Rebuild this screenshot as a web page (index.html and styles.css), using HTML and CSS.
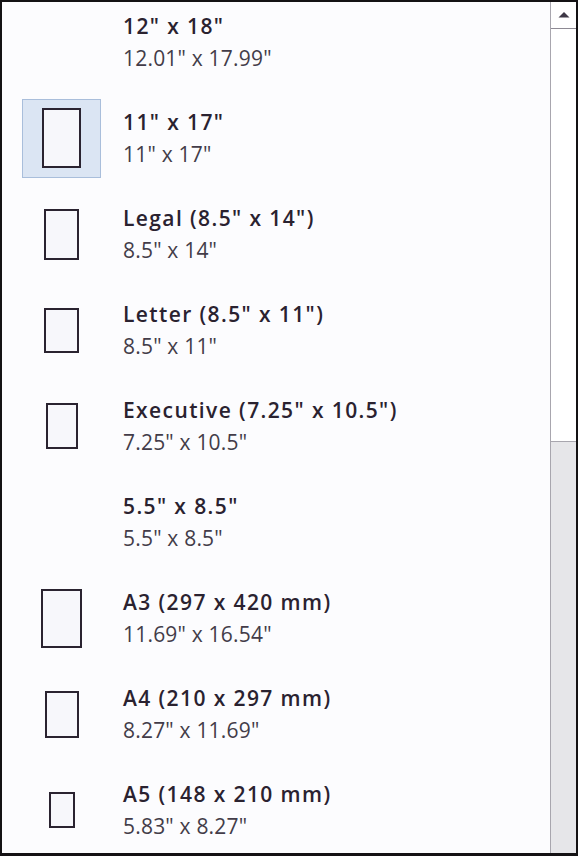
FILE: index.html
```html
<!DOCTYPE html>
<html>
<head>
<meta charset="utf-8">
<link rel="stylesheet" href="styles.css">
</head>
<body>
<div class="window">
  <div class="list">
    <div class="row">
      <div class="cell"></div>
      <div class="text"><div class="title">12" x 18"</div><div class="sub">12.01" x 17.99"</div></div>
    </div>
    <div class="row">
      <div class="cell selected"><div class="page" style="width:39px;height:60px"></div></div>
      <div class="text"><div class="title">11" x 17"</div><div class="sub">11" x 17"</div></div>
    </div>
    <div class="row">
      <div class="cell"><div class="page" style="width:35px;height:51px"></div></div>
      <div class="text"><div class="title">Legal (8.5" x 14")</div><div class="sub">8.5" x 14"</div></div>
    </div>
    <div class="row">
      <div class="cell"><div class="page" style="width:35px;height:45px"></div></div>
      <div class="text"><div class="title">Letter (8.5" x 11")</div><div class="sub">8.5" x 11"</div></div>
    </div>
    <div class="row">
      <div class="cell"><div class="page" style="width:32px;height:46px"></div></div>
      <div class="text"><div class="title">Executive (7.25" x 10.5")</div><div class="sub">7.25" x 10.5"</div></div>
    </div>
    <div class="row">
      <div class="cell"></div>
      <div class="text"><div class="title">5.5" x 8.5"</div><div class="sub">5.5" x 8.5"</div></div>
    </div>
    <div class="row">
      <div class="cell"><div class="page" style="width:41px;height:59px"></div></div>
      <div class="text"><div class="title">A3 (297 x 420 mm)</div><div class="sub">11.69" x 16.54"</div></div>
    </div>
    <div class="row">
      <div class="cell"><div class="page" style="width:34px;height:47px"></div></div>
      <div class="text"><div class="title">A4 (210 x 297 mm)</div><div class="sub">8.27" x 11.69"</div></div>
    </div>
    <div class="row">
      <div class="cell"><div class="page" style="width:26px;height:36px"></div></div>
      <div class="text"><div class="title">A5 (148 x 210 mm)</div><div class="sub">5.83" x 8.27"</div></div>
    </div>
  </div>
  <div class="scrollbar">
    <div class="arrow">
      <svg width="12" height="8" viewBox="0 0 12 8"><polygon points="6,1 11.5,6.5 0.5,6.5" fill="#3e3846"/></svg>
    </div>
    <div class="thumb"></div>
    <div class="track"></div>
  </div>
</div>
</body>
</html>
```
FILE: styles.css
```css
html, body {
  margin: 0;
  padding: 0;
  background: #111;
  overflow: hidden;
}
.window {
  width: 578px;
  height: 856px;
  box-sizing: border-box;
  border: 2px solid #141214;
  border-bottom-width: 3px;
  background: #fcfcfe;
  display: flex;
  overflow: hidden;
}
.list {
  flex: 1;
  overflow: hidden;
  display: flex;
  flex-direction: column;
  margin-top: -8px;
}
.row {
  flex: none;
  height: 96px;
  display: flex;
  align-items: center;
}
.cell {
  flex: none;
  width: 79px;
  height: 79px;
  box-sizing: border-box;
  margin-left: 20px;
  display: flex;
  align-items: center;
  justify-content: center;
  border: 1px solid transparent;
}
.cell.selected {
  background: #dbe5f3;
  border-color: #a9bedb;
}
.page {
  box-sizing: border-box;
  border: 2px solid #2a2330;
  background: #f7f7fb;
}
.text {
  margin-left: 22px;
  font-family: "Open Sans", "Noto Sans", sans-serif;
  font-size: 21px;
  line-height: 32px;
  color: #2a2230;
}
.title {
  font-weight: 600;
  letter-spacing: 1.4px;
}
.sub {
  font-weight: 400;
  letter-spacing: 0.2px;
  color: #433c49;
}
.scrollbar {
  flex: none;
  width: 26px;
  box-sizing: border-box;
  border-left: 1px solid #a8a6ae;
  display: flex;
  flex-direction: column;
}
.arrow {
  height: 26px;
  flex: none;
  display: flex;
  align-items: center;
  justify-content: center;
  background: #ffffff;
  border-bottom: 1px solid #8e8a94;
}
.thumb {
  height: 412px;
  flex: none;
  background: #ffffff;
  border-bottom: 1px solid #a8a6ae;
}
.track {
  flex: 1;
  background: #e6e6e9;
}
```
